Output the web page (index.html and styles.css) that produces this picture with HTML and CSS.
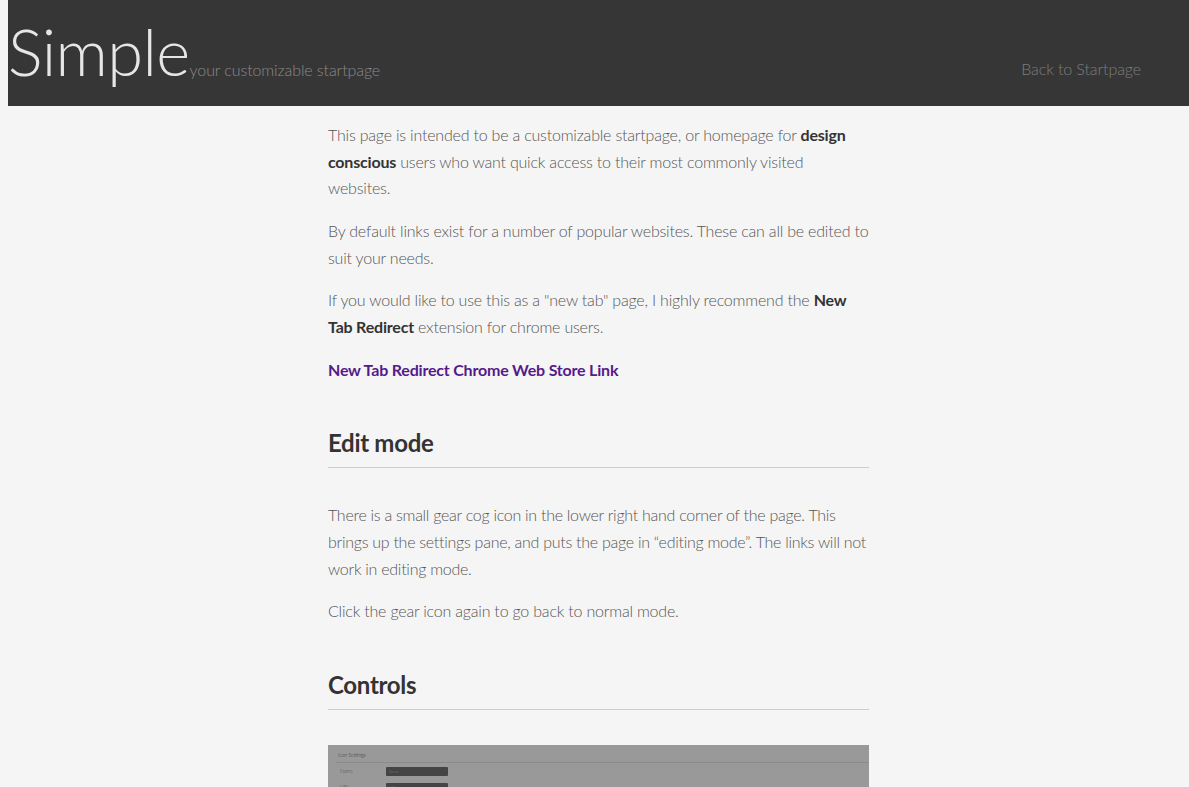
FILE: index.html
```html
<!DOCTYPE html>
<html>
<head>
<meta charset="utf-8">
<title>Simple</title>
<link rel="stylesheet" href="styles.css">
</head>
<body>
<header class="topbar">
  <div class="brand">
    <span class="brand-title">Simple</span><span class="brand-tag">your customizable startpage</span>
  </div>
  <a class="back-link" href="#">Back to Startpage</a>
</header>
<main class="content">
  <p>This page is intended to be a customizable startpage, or homepage for <strong>design conscious</strong> users who want quick access to their most commonly visited websites.</p>
  <p>By default links exist for a number of popular websites. These can all be edited to suit your needs.</p>
  <p>If you would like to use this as a "new tab" page, I highly recommend the <strong>New Tab Redirect</strong> extension for chrome users.</p>
  <p><a class="store-link" href="#">New Tab Redirect Chrome Web Store Link</a></p>
  <h2 class="section-title">Edit mode</h2>
  <p class="tight">There is a small gear cog icon in the lower right hand corner of the page. This brings up the settings pane, and puts the page in “editing mode”. The links will not work in editing mode.</p>
  <p>Click the gear icon again to go back to normal mode.</p>
  <h2 class="section-title">Controls</h2>
  <div class="shot">
    <div class="shot-head">Icon Settings</div>
    <div class="shot-row"><span class="shot-label">Name</span><span class="shot-input">Name</span></div>
    <div class="shot-row"><span class="shot-label">URL</span><span class="shot-input">URL</span></div>
  </div>
</main>
</body>
</html>
```
FILE: styles.css
```css
html, body {
  background: #f5f5f5;
}
body {
  margin: 0 0 0 8px;
  font-family: Lato, "Open Sans", sans-serif;
  font-weight: 300;
  color: #555;
  font-size: 16px;
  overflow-x: hidden;
}
.topbar {
  background: #363636;
  height: 106px;
  display: flex;
  align-items: flex-end;
  justify-content: space-between;
  box-sizing: border-box;
  padding: 0 48px 22px 0;
}
.brand {
  display: flex;
  align-items: baseline;
}
.brand-title {
  font-size: 65px;
  font-weight: 300;
  color: #e6e6e6;
  line-height: 1;
  letter-spacing: -0.6px;
}
.brand-tag {
  color: #8a8a8a;
  font-size: 16px;
  letter-spacing: -0.1px;
}
.back-link {
  color: #7d7d7d;
  text-decoration: none;
  font-size: 16px;
  margin-bottom: 6px;
  letter-spacing: -0.1px;
}
.content {
  width: 541px;
  margin: 0 auto;
  padding-top: 16px;
}
.content p {
  margin: 0 0 16px;
  line-height: 26.67px;
  letter-spacing: -0.2px;
}
.content p.tight {
  letter-spacing: -0.27px;
}
.content strong {
  font-weight: 700;
  color: #333;
}
.store-link {
  color: #551a8b;
  font-weight: 700;
  text-decoration: none;
}
.section-title {
  font-size: 24px;
  font-weight: 700;
  color: #333;
  margin: 46px 0 34px;
  line-height: 28px;
  padding-bottom: 10px;
  border-bottom: 1px solid #cccccc;
  letter-spacing: -0.3px;
}
.shot {
  background: #999;
  height: 120px;
  margin-top: 35px;
}
.shot-head {
  font-size: 5px;
  color: #333;
  height: 18px;
  line-height: 21px;
  box-sizing: border-box;
  padding-left: 2px;
  margin-left: 8px;
  border-bottom: 1px solid #8a8a8a;
}
.shot-row {
  display: flex;
  align-items: center;
  height: 16px;
  padding-left: 12px;
}
.shot-label {
  font-size: 5px;
  color: #444;
  width: 46px;
}
.shot-input {
  width: 62px;
  height: 9px;
  background: #444;
  border-radius: 1px;
  font-size: 4px;
  color: #777;
  padding-left: 3px;
  box-sizing: border-box;
  line-height: 9px;
}
```
